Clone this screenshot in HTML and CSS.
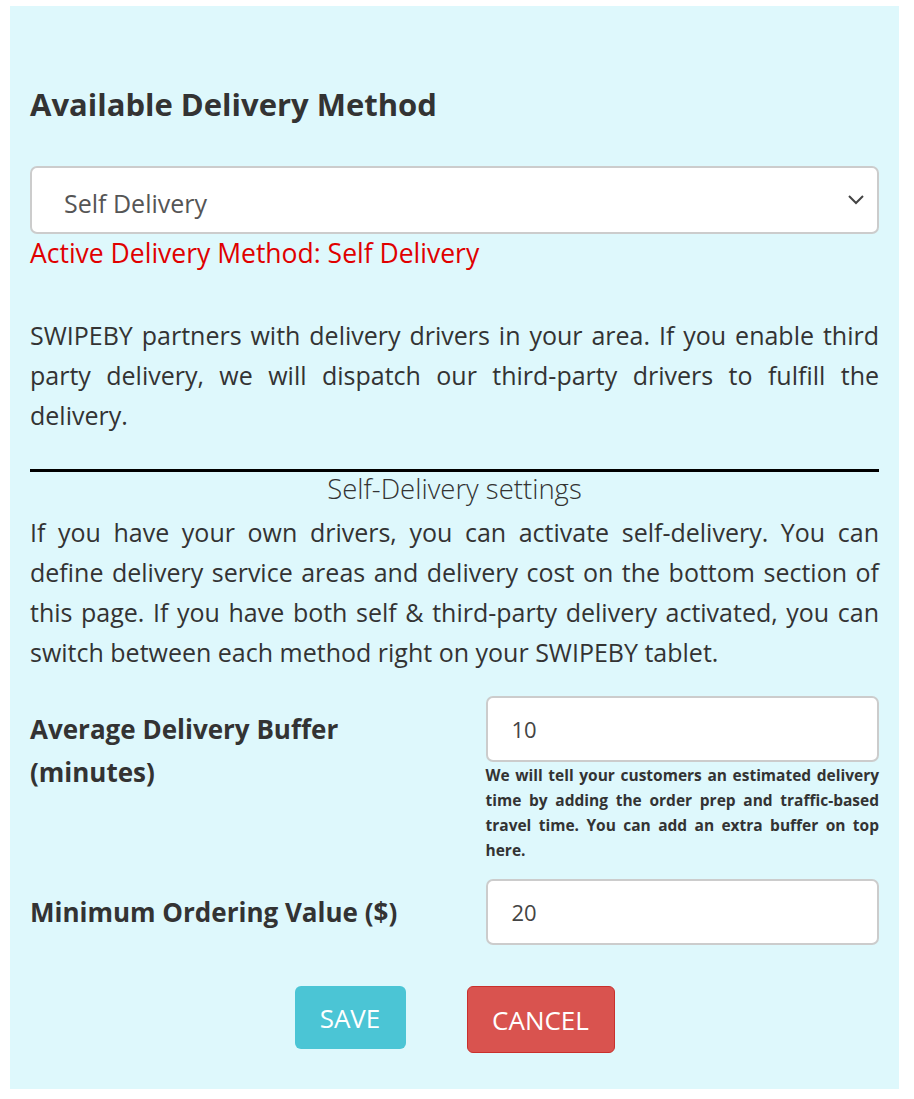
FILE: index.html
```html
<!DOCTYPE html>
<html lang="en">
<head>
  <meta charset="UTF-8" />
  <meta name="viewport" content="width=device-width, initial-scale=1.0"/>
  <title>Delivery Settings</title>
  <link rel="stylesheet" href="styles.css">
</head>
<body>
  <div class="panel">
    <h2 class="title">Available Delivery Method</h2>

    <div class="select-box">
      <span class="select-value">Self Delivery</span>
      <svg class="chevron" width="18" height="12" viewBox="0 0 18 12">
        <polyline points="2,2 9,9 16,2" fill="none" stroke="#444" stroke-width="2"/>
      </svg>
    </div>
    <div class="active-method">Active Delivery Method: Self Delivery</div>

    <p class="info">SWIPEBY partners with delivery drivers in your area. If you enable third party delivery, we will dispatch our third-party drivers to fulfill the delivery.</p>

    <hr class="divider">
    <div class="section-title">Self-Delivery settings</div>
    <p class="info self">If you have your own drivers, you can activate self-delivery. You can define delivery service areas and delivery cost on the bottom section of this page. If you have both self &amp; third-party delivery activated, you can switch between each method right on your SWIPEBY tablet.</p>

    <div class="field-row">
      <label class="field-label">Average Delivery Buffer (minutes)</label>
      <div class="field-input">
        <div class="text-input">10</div>
        <div class="help">We will tell your customers an estimated delivery time by adding the order prep and traffic-based travel time. You can add an extra buffer on top here.</div>
      </div>
    </div>

    <div class="field-row">
      <label class="field-label">Minimum Ordering Value ($)</label>
      <div class="field-input">
        <div class="text-input">20</div>
      </div>
    </div>

    <div class="actions">
      <button class="btn btn-save">SAVE</button>
      <button class="btn btn-cancel">CANCEL</button>
    </div>
  </div>
</body>
</html>
```

FILE: styles.css
```css
body {
  margin: 0;
  padding: 6px 15px 10px 10px;
  font-family: 'Open Sans', 'Noto Sans', sans-serif;
  background-color: #fff;
  color: #333;
}
.panel {
  background-color: #def8fc;
  padding: 70px 20px 36px 20px;
  height: 1083px;
  box-sizing: border-box;
}
.title {
  margin: 0 0 34px 0;
  font-size: 31px;
  font-weight: 700;
  line-height: 56px;
  color: #333;
}
.select-box {
  height: 68px;
  box-sizing: border-box;
  border: 2px solid #ccc;
  border-radius: 7px;
  background: #fff;
  display: flex;
  align-items: center;
  justify-content: space-between;
  padding: 0 12px 0 32px;
}
.select-value {
  font-size: 25px;
  color: #555;
  padding-top: 5px;
}
.active-method {
  color: #e00000;
  font-size: 26.5px;
  line-height: 38px;
}
.info {
  margin: 43px 0 0 0;
  font-size: 25px;
  line-height: 40px;
  text-align: justify;
}
.info.self {
  margin-top: 6px;
}
.divider {
  border: none;
  border-top: 3px solid #000;
  margin: 34px 0 0 0;
}
.section-title {
  text-align: center;
  font-size: 27.5px;
  font-weight: 300;
  line-height: 34px;
}
.field-row {
  display: grid;
  grid-template-columns: 1fr 1fr;
  column-gap: 62px;
  margin-top: 24px;
}
.field-row + .field-row {
  margin-top: 16px;
}
.field-label {
  font-size: 26px;
  font-weight: 700;
  line-height: 43px;
  padding-top: 12px;
}
.text-input {
  height: 66px;
  box-sizing: border-box;
  border: 2px solid #ccc;
  border-radius: 7px;
  background: #fff;
  padding: 0 24px;
  display: flex;
  align-items: center;
  font-size: 22px;
  color: #444;
}
.help {
  font-size: 15.5px;
  font-weight: 700;
  line-height: 25px;
  text-align: justify;
  padding-top: 1px;
}
.actions {
  display: flex;
  justify-content: center;
  align-items: flex-start;
  gap: 61px;
  margin-top: 41px;
}
.btn {
  font-family: 'Open Sans', 'Noto Sans', sans-serif;
  font-size: 26px;
  color: #fff;
  border-radius: 6px;
  cursor: pointer;
}
.btn-save {
  background-color: #4bc5d5;
  border: none;
  width: 111px;
  height: 63px;
}
.btn-cancel {
  background-color: #d9534f;
  border: 1px solid #c9302c;
  width: 148px;
  height: 67px;
}
```
